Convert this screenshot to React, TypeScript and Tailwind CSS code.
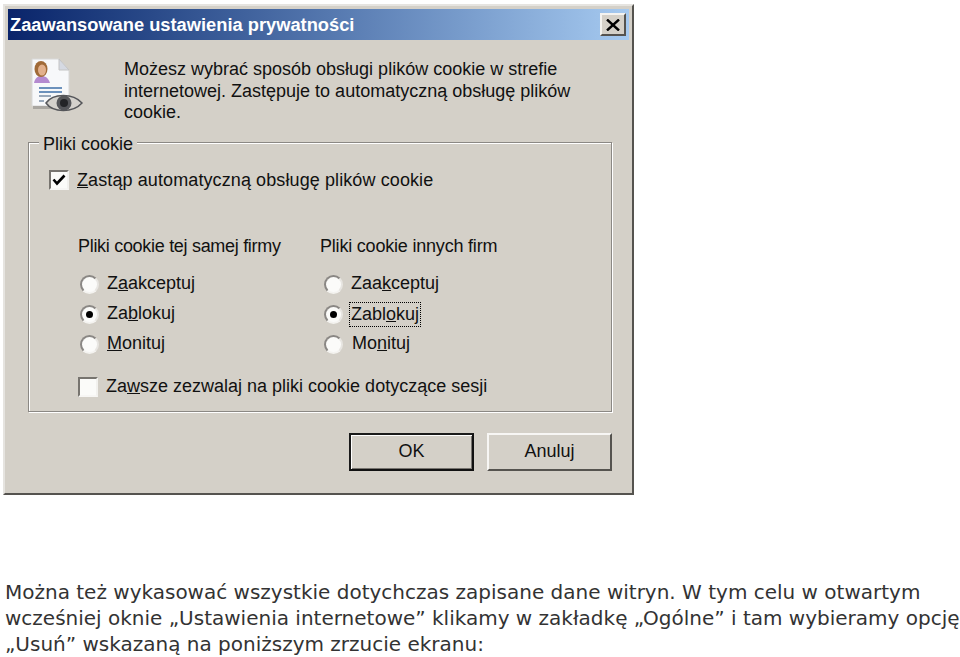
const DIALOG_FONT = "font-['Liberation_Sans',sans-serif]";

/** Sunken win2k-style radio button. */
function Radio({ checked, className }: { checked?: boolean; className: string }) {
  return (
    <span
      className={
        "flex h-[19px] w-[19px] flex-none items-center justify-center rounded-full border-2 border-t-[#8a8784] border-r-[#e8e6e2] border-b-[#f4f3f0] border-l-[#8a8784] bg-[#fbfbf9] " +
        className
      }
    >
      {checked && <span className="h-[7px] w-[7px] rounded-full bg-black" />}
    </span>
  );
}

function Checkbox({ checked }: { checked?: boolean }) {
  return (
    <span className="flex h-[20px] w-[20px] flex-none items-center justify-center border-2 border-t-[#77746f] border-r-[#f2f1ee] border-b-[#f7f6f4] border-l-[#77746f] bg-[#fbfbf9]">
      {checked && (
        <svg width="14" height="12" viewBox="0 0 14 12">
          <path d="M1.5 5.5 L5 9.5 L12.5 1.5" fill="none" stroke="#000" strokeWidth="2.6" />
        </svg>
      )}
    </span>
  );
}

function RadioRow({
  checked,
  focused,
  children,
  radio,
  gap,
}: {
  checked?: boolean;
  focused?: boolean;
  children: React.ReactNode;
  radio: string;
  gap: string;
}) {
  return (
    <div className={"flex h-[30px] items-center " + gap}>
      <Radio checked={checked} className={radio} />
      <span className={focused ? "border border-dotted border-black px-px leading-[23px]" : ""}>
        {children}
      </span>
    </div>
  );
}

function PrivacyIcon() {
  return (
    <svg width="52" height="56" viewBox="0 0 52 56" className="mt-[-5px] flex-none">
      <path d="M1 2 H28 L38 13 V49 H1 Z" fill="#f7f8fa" stroke="#d8d8d8" />
      <path d="M28 2 V13 H38 Z" fill="#d5d9e2" stroke="#c4c4c4" />
      <rect x="2" y="49" width="37" height="3" fill="#a9a6a1" />
      <path d="M3 26 C4 20 8 19 10 19 C14 19 17 20 19 26 Z" fill="#b48ad0" />
      <ellipse cx="10" cy="12" rx="6.5" ry="8" fill="#a06a38" />
      <ellipse cx="11" cy="13" rx="4" ry="5.5" fill="#e2b08c" />
      <path d="M8 31 H31 M8 35 H31" stroke="#3f6fa8" strokeWidth="1.4" />
      <path d="M8 39 H20 M8 44 H13" stroke="#7c8ea6" strokeWidth="1.4" />
      <path d="M15 46 C22 36 42 36 51 46 C42 56 22 56 15 46 Z" fill="#d4d1cc" stroke="#55565a" strokeWidth="1.5" />
      <circle cx="33" cy="46" r="7.5" fill="#55565a" />
      <circle cx="33" cy="46" r="4" fill="#232427" />
    </svg>
  );
}

export default function App() {
  return (
    <div className="h-[657px] w-[960px] overflow-hidden bg-white pl-[3px] pt-[4px]">
      <div
        className={
          "flex h-[491px] w-[631px] flex-col border-2 border-t-[#e6e4e0] border-r-[#55534f] border-b-[#55534f] border-l-[#e6e4e0] bg-[#d4d0c8] px-[3px] pt-[3px] text-[18px] leading-[21.5px] text-[#111] " +
          DIALOG_FONT
        }
      >
        {/* Title bar */}
        <div className="flex h-[31px] flex-none items-center justify-between bg-gradient-to-r from-[#0a246a] to-[#a6caf0] pl-[2px] pr-[3px]">
          <span className="text-[18.3px] font-bold text-white">
            Zaawansowane ustawienia prywatności
          </span>
          <span className="flex h-[23px] w-[26px] items-center justify-center border-2 border-t-[#f4f3f0] border-r-[#55534f] border-b-[#55534f] border-l-[#f4f3f0] bg-[#d4d0c8]">
            <svg width="14" height="12" viewBox="0 0 14 12">
              <path d="M1 0.5 L13 11.5 M13 0.5 L1 11.5" stroke="#000" strokeWidth="2.4" />
            </svg>
          </span>
        </div>

        {/* Intro */}
        <div className="flex pl-[23px] pt-[22px]">
          <PrivacyIcon />
          <p className="ml-[41px] mt-[-3px] w-[450px]">
            Możesz wybrać sposób obsługi plików cookie w strefie internetowej. Zastępuje to automatyczną obsługę plików cookie.
          </p>
        </div>

        {/* Group box */}
        <div className="relative ml-[20px] mt-[18px] h-[270px] w-[584px] flex-none border border-[#8b8884] px-[20px] pt-[25px] shadow-[1px_1px_0_#fff,inset_1px_1px_0_#fff]">
          <span className="absolute left-[10px] top-[-9px] bg-[#d4d0c8] px-[4px]">Pliki cookie</span>
          <div className="flex items-center gap-[8px] leading-[24px]">
            <Checkbox checked />
            <span className="tracking-[0.1px]">
              <u>Z</u>astąp automatyczną obsługę plików cookie
            </span>
          </div>

          <div className="ml-[29px] mt-[44px] flex">
            <div className="w-[242px]">
              <div className="mb-[12px] tracking-[-0.3px]">Pliki cookie tej samej firmy</div>
              <RadioRow radio="ml-[2px]" gap="gap-[8px]">
                Z<u>a</u>akceptuj
              </RadioRow>
              <RadioRow radio="ml-[2px]" gap="gap-[8px]" checked>
                Za<u>b</u>lokuj
              </RadioRow>
              <RadioRow radio="ml-[2px]" gap="gap-[8px]">
                <u>M</u>onituj
              </RadioRow>
            </div>
            <div>
              <div className="mb-[12px] tracking-[-0.2px]">Pliki cookie innych firm</div>
              <RadioRow radio="ml-[4px]" gap="gap-[8px]">
                Zaa<u>k</u>ceptuj
              </RadioRow>
              <RadioRow radio="ml-[4px]" gap="gap-[6px]" checked focused>
                Zabl<u>o</u>kuj
              </RadioRow>
              <RadioRow radio="ml-[4px]" gap="gap-[9px]">
                Mo<u>n</u>ituj
              </RadioRow>
            </div>
          </div>

          <div className="ml-[29px] mt-[17px] flex items-center gap-[8px]">
            <Checkbox />
            <span>
              Za<u>w</u>sze zezwalaj na pliki cookie dotyczące sesji
            </span>
          </div>
        </div>

        {/* Buttons */}
        <div className="mt-[21px] flex justify-end gap-[13px] pr-[17px]">
          <button className="h-[38px] w-[125px] border-2 border-t-[#1a1a1a] border-r-[#111] border-b-[#111] border-l-[#1a1a1a] bg-[#d4d0c8] shadow-[inset_1px_1px_0_#fff,inset_-1px_-1px_0_#77746f]">
            OK
          </button>
          <button className="h-[38px] w-[125px] border-2 border-t-[#f7f6f4] border-r-[#55534f] border-b-[#55534f] border-l-[#f7f6f4] bg-[#d4d0c8]">
            Anuluj
          </button>
        </div>
      </div>

      {/* Article paragraph */}
      <p className="mt-[84px] w-[957px] pl-[2px] font-['DejaVu_Sans',sans-serif] text-[20px] leading-[26px] text-[#333]">
        Można też wykasować wszystkie dotychczas zapisane dane witryn. W tym celu w otwartym wcześniej oknie „Ustawienia internetowe” klikamy w zakładkę „Ogólne” i tam wybieramy opcję „Usuń” wskazaną na poniższym zrzucie ekranu:
      </p>
    </div>
  );
}
